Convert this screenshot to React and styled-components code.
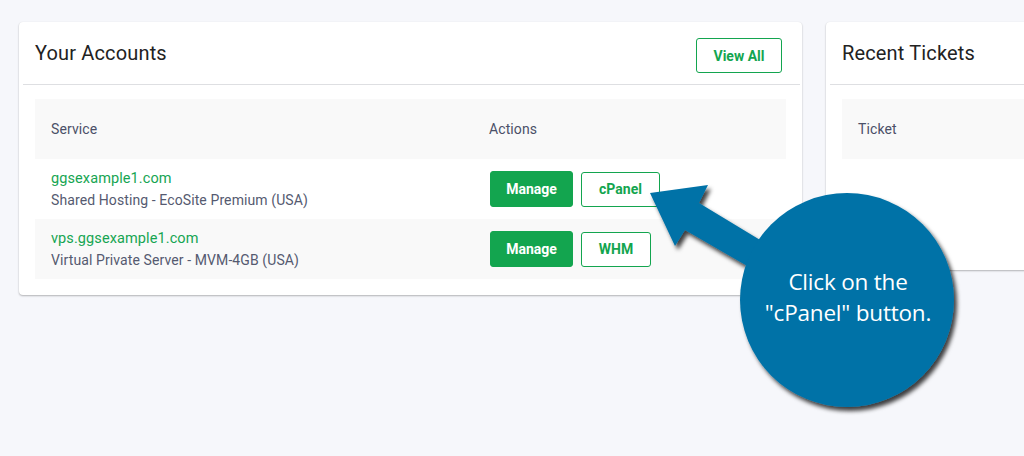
import React from "react";
import styled, { createGlobalStyle } from "styled-components";

const Global = createGlobalStyle`
  html, body { margin: 0; padding: 0; background: #f6f7fb; }
  body { font-family: Roboto, "Liberation Sans", sans-serif; overflow: hidden; }
  * { box-sizing: border-box; }
`;

const Page = styled.div`
  position: relative;
  width: 1024px;
  height: 456px;
  overflow: hidden;
  display: flex;
  align-items: flex-start;
  gap: 24px;
  padding: 22px 0 0 19px;
`;

const Card = styled.div`
  flex: 0 0 ${(p) => p.$w}px;
  height: ${(p) => p.$h}px;
  background: #fff;
  border-radius: 4px;
  box-shadow: 0 1px 2px rgba(0, 0, 0, 0.28), 0 0 1px rgba(0, 0, 0, 0.06);
  display: flex;
  flex-direction: column;
`;

const CardHeader = styled.div`
  height: 63px;
  margin: 0 2px 0 4px;
  padding: 0 18px 0 12px;
  display: flex;
  align-items: center;
  justify-content: space-between;
  border-bottom: 1px solid #dedfe2;
`;

const Title = styled.h2`
  margin: 0;
  font-size: 20px;
  font-weight: 400;
  color: #222;
  letter-spacing: 0.15px;
`;

const Table = styled.div`
  margin: 14px 16px 0 16px;
  display: flex;
  flex-direction: column;
`;

const Row = styled.div`
  display: grid;
  grid-template-columns: ${(p) => p.$cols};
  height: ${(p) => p.$h}px;
  align-items: center;
  background: ${(p) => (p.$alt ? "#f9f9f9" : "#fff")};
`;

const Cell = styled.div`
  padding-left: ${(p) => (p.$row ? 17 : 16)}px;
  display: flex;
  flex-direction: ${(p) => (p.$row ? "row" : "column")};
  gap: ${(p) => (p.$row ? "8px" : "1px")};
  align-items: ${(p) => (p.$row ? "center" : "flex-start")};
`;

const HeadText = styled.span`
  font-size: 14px;
  color: #4b5068;
  letter-spacing: 0.1px;
`;

const Domain = styled.a`
  font-size: 14.5px;
  color: #16a552;
  text-decoration: none;
  line-height: 20px;
  letter-spacing: 0.1px;
`;

const Desc = styled.span`
  font-size: 14px;
  color: #555a70;
  line-height: 20px;
  letter-spacing: 0.1px;
`;

const Button = styled.button`
  font-family: Roboto, "Liberation Sans", sans-serif;
  font-weight: 700;
  font-size: 14px;
  height: ${(p) => (p.$solid ? 36 : 35)}px;
  width: ${(p) => p.$w}px;
  border-radius: 3px;
  border: 1px solid #13a54f;
  background: ${(p) => (p.$solid ? "#13a54f" : "#fff")};
  color: ${(p) => (p.$solid ? "#fff" : "#13a54f")};
  padding: 0;
  cursor: pointer;
  margin-top: ${(p) => p.$mt || 0}px;
`;

const CalloutWrap = styled.div`
  position: absolute;
  left: 630px;
  top: 170px;
  width: 350px;
  height: 260px;
  pointer-events: none;
`;

const CalloutText = styled.div`
  position: absolute;
  left: 110px;
  top: 96px;
  width: 216px;
  text-align: center;
  color: #fff;
  font-family: "Open Sans", "Liberation Sans", sans-serif;
  font-size: 22.5px;
  line-height: 31px;
  letter-spacing: -0.2px;
`;

function Callout() {
  return (
    <CalloutWrap>
      <svg width="350" height="260" viewBox="630 170 350 260">
        <defs>
          <filter id="sh" x="-20%" y="-20%" width="150%" height="150%">
            <feDropShadow dx="3" dy="4" stdDeviation="2" floodColor="#000" floodOpacity="0.75" />
          </filter>
        </defs>
        <g filter="url(#sh)" fill="#0072a7">
          <polygon points="650,193 708,185 699,203 790,258 780,285 685,230 675,246" />
          <circle cx="847" cy="300" r="107" />
        </g>
      </svg>
      <CalloutText>
        Click on the
        <br />
        "cPanel" button.
      </CalloutText>
    </CalloutWrap>
  );
}

export default function App() {
  return (
    <>
      <Global />
      <Page>
        <Card $w={783} $h={273}>
          <CardHeader>
            <Title>Your Accounts</Title>
            <Button $w={86} $mt={5}>View All</Button>
          </CardHeader>
          <Table>
            <Row $cols="438px 1fr" $h={60} $alt>
              <Cell><HeadText>Service</HeadText></Cell>
              <Cell><HeadText>Actions</HeadText></Cell>
            </Row>
            <Row $cols="438px 1fr" $h={60}>
              <Cell>
                <Domain>ggsexample1.com</Domain>
                <Desc>Shared Hosting - EcoSite Premium (USA)</Desc>
              </Cell>
              <Cell $row>
                <Button $solid $w={83}>Manage</Button>
                <Button $w={79}>cPanel</Button>
              </Cell>
            </Row>
            <Row $cols="438px 1fr" $h={60} $alt>
              <Cell>
                <Domain>vps.ggsexample1.com</Domain>
                <Desc>Virtual Private Server - MVM-4GB (USA)</Desc>
              </Cell>
              <Cell $row>
                <Button $solid $w={83}>Manage</Button>
                <Button $w={70}>WHM</Button>
              </Cell>
            </Row>
          </Table>
        </Card>
        <Card $w={783} $h={248}>
          <CardHeader>
            <Title>Recent Tickets</Title>
          </CardHeader>
          <Table>
            <Row $cols="1fr" $h={60} $alt>
              <Cell><HeadText>Ticket</HeadText></Cell>
            </Row>
          </Table>
        </Card>
      </Page>
      <Callout />
    </>
  );
}
